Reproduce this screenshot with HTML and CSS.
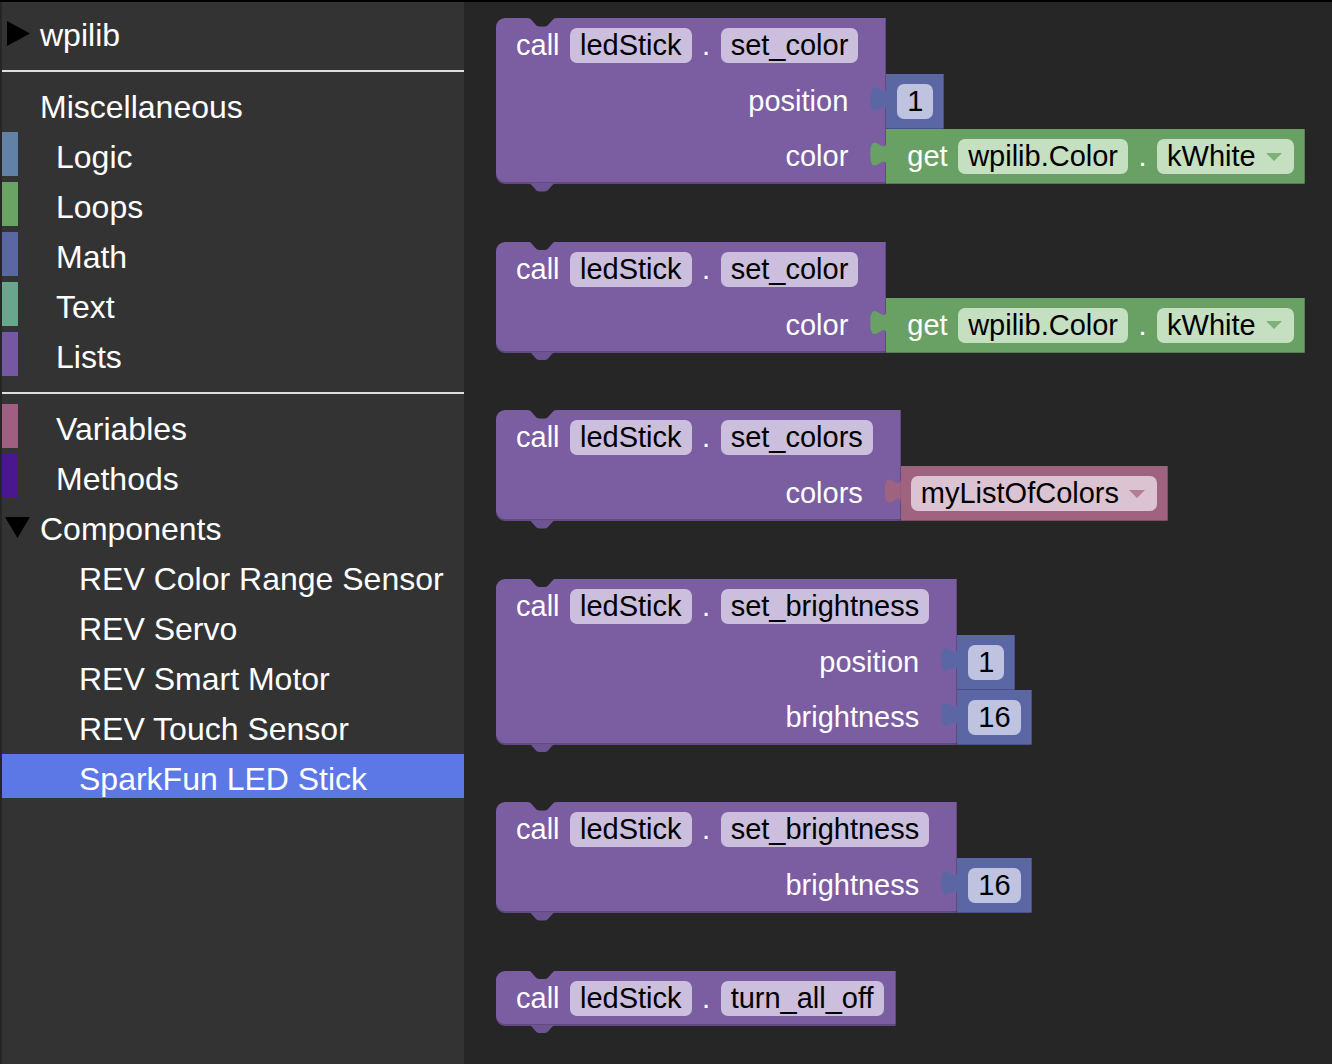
FILE: index.html
```html
<!DOCTYPE html>
<html lang="en">
<head>
<meta charset="utf-8">
<title>Blocks</title>
<link rel="stylesheet" href="styles.css">
</head>
<body>
<div class="app">
  <nav class="toolbox">
    <div class="cat tree">
      <svg class="tri tri-right" viewBox="0 0 23 25"><polygon points="0,0 23,12.5 0,25"/></svg>
      <span class="lbl">wpilib</span>
    </div>
    <div class="sep"></div>
    <div class="cat misc"><span class="lbl">Miscellaneous</span></div>
    <div class="cat"><span class="sw sw-logic"></span><span class="lbl">Logic</span></div>
    <div class="cat"><span class="sw sw-loops"></span><span class="lbl">Loops</span></div>
    <div class="cat"><span class="sw sw-math"></span><span class="lbl">Math</span></div>
    <div class="cat"><span class="sw sw-text"></span><span class="lbl">Text</span></div>
    <div class="cat"><span class="sw sw-lists"></span><span class="lbl">Lists</span></div>
    <div class="sep"></div>
    <div class="cat"><span class="sw sw-vars"></span><span class="lbl">Variables</span></div>
    <div class="cat"><span class="sw sw-methods"></span><span class="lbl">Methods</span></div>
    <div class="cat tree">
      <svg class="tri tri-down" viewBox="0 0 25 21"><polygon points="0,0 25,0 12.5,21"/></svg>
      <span class="lbl">Components</span>
    </div>
    <div class="cat item"><span class="lbl">REV Color Range Sensor</span></div>
    <div class="cat item"><span class="lbl">REV Servo</span></div>
    <div class="cat item"><span class="lbl">REV Smart Motor</span></div>
    <div class="cat item"><span class="lbl">REV Touch Sensor</span></div>
    <div class="cat item sel"><span class="lbl">SparkFun LED Stick</span></div>
  </nav>

  <main class="flyout">
    <div class="stmt">
      <div class="body">
        <div class="top"><span class="txt">call</span><span class="pill">ledStick</span><span class="txt">.</span><span class="pill">set_color</span></div>
        <div class="in"><span class="txt">position</span></div>
        <div class="in"><span class="txt">color</span></div>
      </div>
      <div class="kids">
        <div class="val math"><span class="pill">1</span></div>
        <div class="val green"><span class="txt">get</span><span class="pill">wpilib.Color</span><span class="txt">.</span><span class="pill dd">kWhite<svg class="arrow" viewBox="0 0 16 8"><polygon points="0,0 16,0 8,8"/></svg></span></div>
      </div>
    </div>

    <div class="stmt">
      <div class="body">
        <div class="top"><span class="txt">call</span><span class="pill">ledStick</span><span class="txt">.</span><span class="pill">set_color</span></div>
        <div class="in"><span class="txt">color</span></div>
      </div>
      <div class="kids">
        <div class="val green"><span class="txt">get</span><span class="pill">wpilib.Color</span><span class="txt">.</span><span class="pill dd">kWhite<svg class="arrow" viewBox="0 0 16 8"><polygon points="0,0 16,0 8,8"/></svg></span></div>
      </div>
    </div>

    <div class="stmt">
      <div class="body">
        <div class="top"><span class="txt">call</span><span class="pill">ledStick</span><span class="txt">.</span><span class="pill">set_colors</span></div>
        <div class="in"><span class="txt">colors</span></div>
      </div>
      <div class="kids">
        <div class="val pink"><span class="pill dd">myListOfColors<svg class="arrow" viewBox="0 0 16 8"><polygon points="0,0 16,0 8,8"/></svg></span></div>
      </div>
    </div>

    <div class="stmt">
      <div class="body">
        <div class="top"><span class="txt">call</span><span class="pill">ledStick</span><span class="txt">.</span><span class="pill">set_brightness</span></div>
        <div class="in"><span class="txt">position</span></div>
        <div class="in"><span class="txt">brightness</span></div>
      </div>
      <div class="kids">
        <div class="val math"><span class="pill">1</span></div>
        <div class="val math"><span class="pill">16</span></div>
      </div>
    </div>

    <div class="stmt">
      <div class="body">
        <div class="top"><span class="txt">call</span><span class="pill">ledStick</span><span class="txt">.</span><span class="pill">set_brightness</span></div>
        <div class="in"><span class="txt">brightness</span></div>
      </div>
      <div class="kids">
        <div class="val math"><span class="pill">16</span></div>
      </div>
    </div>

    <div class="stmt">
      <div class="body solo">
        <div class="top"><span class="txt">call</span><span class="pill">ledStick</span><span class="txt">.</span><span class="pill">turn_all_off</span></div>
      </div>
    </div>
  </main>
</div>
</body>
</html>
```

FILE: styles.css
```css
* { box-sizing: border-box; }
html, body { margin: 0; height: 100%; }
body {
  background: #000;
  font-family: "Liberation Sans", Arial, Helvetica, sans-serif;
  overflow: hidden;
}
.app {
  display: flex;
  height: 1062px;
  margin-top: 2px;
  padding-left: 2px;
  background: #262626;
}

/* ---------- toolbox ---------- */
.toolbox {
  width: 462px;
  flex: none;
  background: #333333;
  padding-top: 8px;
  color: #ffffff;
  font-size: 32px;
}
.cat {
  display: flex;
  height: 44px;
  margin-bottom: 6px;
}
.lbl {
  padding-top: 6px;
  line-height: 38px;
  white-space: nowrap;
}
.sw { width: 16px; flex: none; margin-right: 38px; }
.sw-logic { background: #6281a6; }
.sw-loops { background: #69a465; }
.sw-math { background: #5b66a4; }
.sw-text { background: #68a68e; }
.sw-lists { background: #7458a4; }
.sw-vars { background: #a05f80; }
.sw-methods { background: #4b178f; }
.misc .lbl { padding-left: 38px; }
.item .lbl { padding-left: 77px; }
.sel { background: #5c77e6; }
.tri { flex: none; fill: #000; }
.tri-right { width: 23px; height: 25px; margin: 11px 10px 0 5px; }
.tri-down { width: 25px; height: 21px; margin: 13px 10px 0 3px; }
.sep {
  height: 2px;
  background: #dedede;
  margin: 16px 0 10px;
}

/* ---------- flyout ---------- */
.flyout {
  flex: 1;
  display: flex;
  flex-direction: column;
  align-items: flex-start;
  gap: 57.5px;
  padding: 16px 0 0 32px;
  font-size: 29px;
  color: #fff;
}
.stmt { display: flex; align-items: flex-start; }
.body {
  position: relative;
  background: #7b5da2;
  border-radius: 9px 0 0 9px;
  padding: 10px 28px 0 20px;
  box-shadow: inset 0 -2px 0 rgba(0,0,0,0.2), inset -1px 0 0 rgba(0,0,0,0.2);
}
.body.solo { padding: 10px 12px 10px 20px; }
.body::before,
.body::after {
  content: "";
  position: absolute;
  left: 31px;
  width: 30px;
  height: 9px;
  clip-path: path('M0 0 C2.5 0 3.5 0.8 5 2.5 L8.5 6.5 C9.5 7.8 10.5 8.5 12.5 8.5 H17.5 C19.5 8.5 20.5 7.8 21.5 6.5 L25 2.5 C26.5 0.8 27.5 0 30 0 Z');
}
.body::before { top: 0; background: #262626; }
.body::after { top: calc(100% - 1px); background: #6f5494; }
.top {
  display: flex;
  align-items: center;
  gap: 10.5px;
  height: 35px;
  margin-bottom: 11px;
}
.solo .top { margin-bottom: 0; }
.in {
  height: 55px;
  display: flex;
  align-items: center;
  justify-content: flex-end;
  padding-right: 10px;
}
.txt { line-height: 35px; white-space: nowrap; }
.pill {
  display: flex;
  align-items: center;
  height: 35px;
  line-height: 35px;
  padding: 0 10px;
  border-radius: 7px;
  background: #cbbfdd;
  color: #000;
  white-space: nowrap;
}
.dd { padding-right: 12px; }
.arrow { width: 16px; height: 8px; margin-left: 10px; flex: none; }

.kids {
  display: flex;
  flex-direction: column;
  align-items: flex-start;
  padding-top: 56px;
}
.val {
  position: relative;
  height: 55px;
  display: flex;
  align-items: center;
  gap: 10.5px;
  padding: 0 11px;
  box-shadow: inset 0 -1px 0 rgba(0,0,0,0.2), inset -1px 0 0 rgba(0,0,0,0.2);
}
.val::before {
  content: "";
  position: absolute;
  left: -16px;
  top: 12px;
  width: 16px;
  height: 26px;
  background: inherit;
  clip-path: path('M16 0 C16 17.3 0 -13.9 0 13 C0 39.9 16 8.7 16 26 Z');
}
.math { background: #5b67a5; }
.math .pill { background: #bfc3df; }
.green { background: #69a164; padding-left: 21px; }
.green .pill { background: #c5dfc1; }
.green .arrow { fill: #7fb079; }
.pink { background: #a0637f; padding-left: 10px; }
.pink .pill { background: #dcc3d2; }
.pink .arrow { fill: #b27d97; }
```
